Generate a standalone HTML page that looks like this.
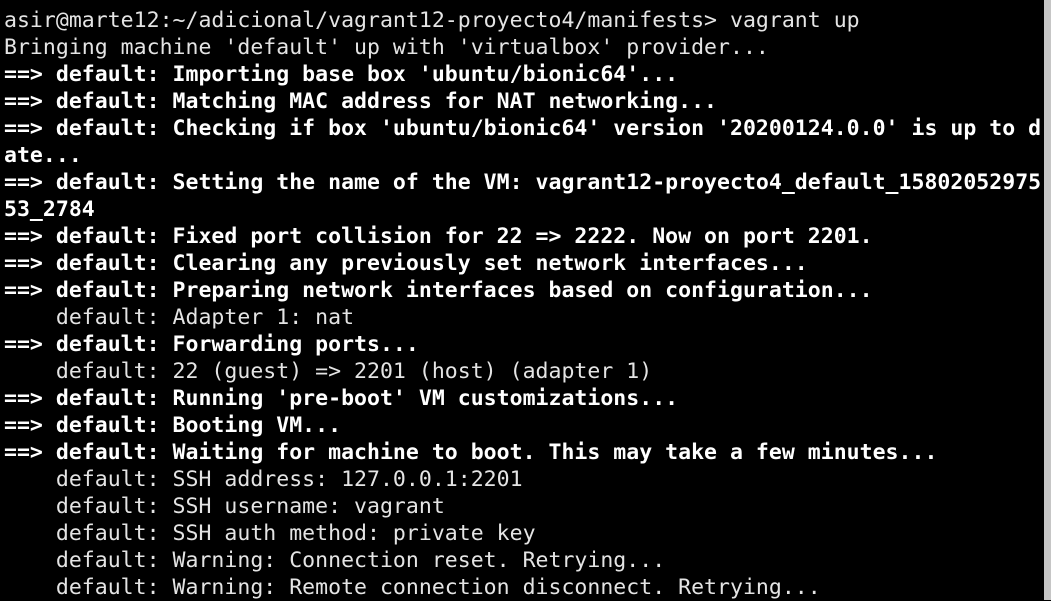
<!DOCTYPE html>
<html><head><style>
html,body{margin:0;padding:0;background:#000;width:1051px;height:600px;overflow:hidden}
pre{margin:0;position:absolute;left:4px;top:7px;font-family:"DejaVu Sans Mono","Liberation Mono",monospace;font-size:21.5px;line-height:27px;color:#e4e4e4;white-space:pre;letter-spacing:0.02px}
b{color:#fff}
.bar{position:absolute;left:1044px;top:0;width:7px;height:600px;background:#c6c6c6}
</style></head><body>
<pre>asir@marte12:~/adicional/vagrant12-proyecto4/manifests&gt; vagrant up
Bringing machine 'default' up with 'virtualbox' provider...
<b>==&gt; default: Importing base box 'ubuntu/bionic64'...</b>
<b>==&gt; default: Matching MAC address for NAT networking...</b>
<b>==&gt; default: Checking if box 'ubuntu/bionic64' version '20200124.0.0' is up to d</b>
<b>ate...</b>
<b>==&gt; default: Setting the name of the VM: vagrant12-proyecto4_default_15802052975</b>
<b>53_2784</b>
<b>==&gt; default: Fixed port collision for 22 =&gt; 2222. Now on port 2201.</b>
<b>==&gt; default: Clearing any previously set network interfaces...</b>
<b>==&gt; default: Preparing network interfaces based on configuration...</b>
    default: Adapter 1: nat
<b>==&gt; default: Forwarding ports...</b>
    default: 22 (guest) =&gt; 2201 (host) (adapter 1)
<b>==&gt; default: Running 'pre-boot' VM customizations...</b>
<b>==&gt; default: Booting VM...</b>
<b>==&gt; default: Waiting for machine to boot. This may take a few minutes...</b>
    default: SSH address: 127.0.0.1:2201
    default: SSH username: vagrant
    default: SSH auth method: private key
    default: Warning: Connection reset. Retrying...
    default: Warning: Remote connection disconnect. Retrying...</pre>
<div class="bar"></div>
</body></html>
